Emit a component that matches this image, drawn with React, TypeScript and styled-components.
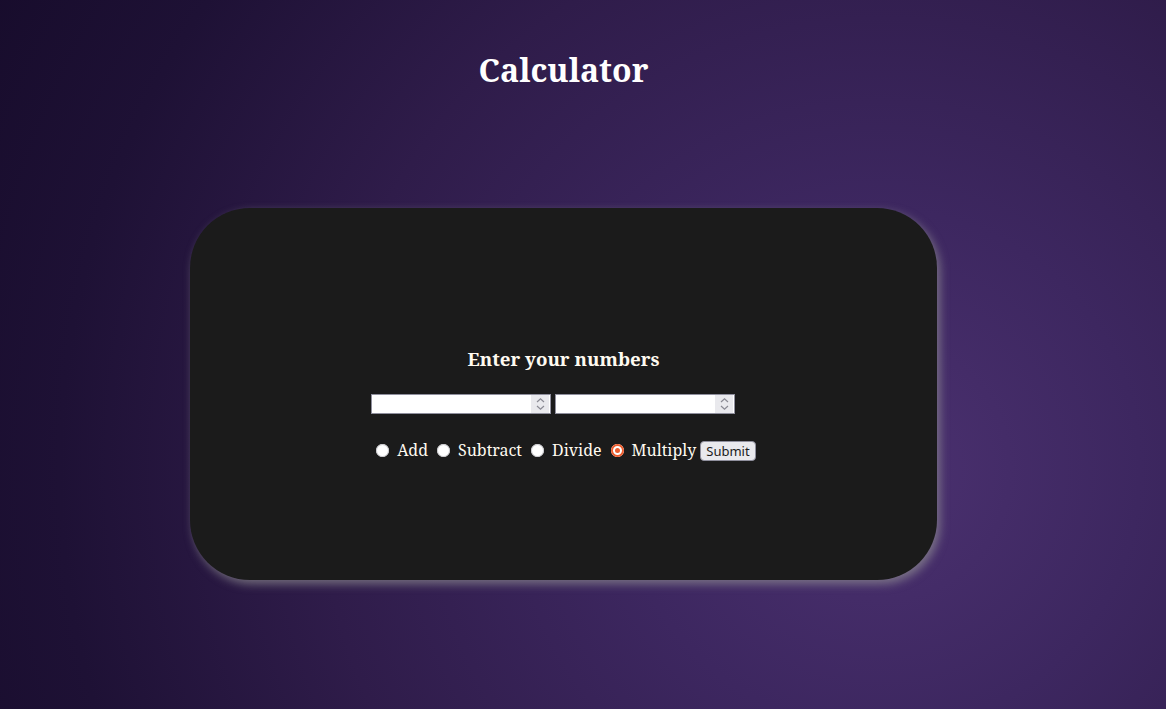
import { useState } from 'react';
import styled, { createGlobalStyle } from 'styled-components';

const GlobalStyle = createGlobalStyle`
  html, body {
    margin: 0;
    padding: 0;
  }
  body {
    font-family: "Noto Serif", "DejaVu Serif Condensed", "DejaVu Serif", serif;
    background: #160b2a;
  }
`

const operations = ['Add', 'Subtract', 'Divide', 'Multiply'];

function Spinner() {
  return (
    <SpinBox>
      <svg width="9" height="14" viewBox="0 0 9 14" fill="none" stroke="#8a8a94" strokeWidth="1.2">
        <path d="M1 5 L4.5 1.8 L8 5" />
        <path d="M1 9 L4.5 12.2 L8 9" />
      </svg>
    </SpinBox>
  )
}

function App() {
  const [op, setOp] = useState('Multiply');

  return (
    <Page>
      <GlobalStyle />
      <Column>
        <Title>Calculator</Title>

        <Card>
          <Heading>Enter your numbers</Heading>

          <Form>
            <InputsRow>
              <InputWrap>
                <NumberInput type="number" />
                <Spinner />
              </InputWrap>
              <InputWrap>
                <NumberInput type="number" />
                <Spinner />
              </InputWrap>
            </InputsRow>

            <OptionsRow>
              {operations.map((name) => (
                <Option key={name}>
                  <Radio
                    type="radio"
                    name="operation"
                    checked={op === name}
                    onChange={() => setOp(name)}
                  />
                  {name}
                </Option>
              ))}
              <SubmitButton type="button">Submit</SubmitButton>
            </OptionsRow>
          </Form>
        </Card>
      </Column>
    </Page>
  )
}

export default App

const Page = styled.div`
  min-height: 100vh;
  background: radial-gradient(
    circle at 880px 470px,
    #4b3170 0px,
    #3d2760 260px,
    #2f1c4a 560px,
    #1e1135 820px,
    #160b2a 1050px
  );
`

const Column = styled.div`
  width: 1127px;
  display: flex;
  flex-direction: column;
  align-items: center;
`

const Title = styled.h1`
  margin: 50px 0 0;
  font-size: 32px;
  line-height: 40px;
  font-weight: 700;
  color: #ffffff;
`

const Card = styled.div`
  margin-top: 118px;
  width: 747px;
  height: 372px;
  box-sizing: border-box;
  border-radius: 60px;
  background: #1b1b1b;
  box-shadow: 3px 4px 10px rgba(150, 150, 150, 0.65);
  display: flex;
  flex-direction: column;
  align-items: center;
  padding-top: 138px;
  color: #fffaf0;
`

const Heading = styled.h3`
  margin: 0;
  font-size: 18.72px;
  line-height: 26px;
  font-weight: 700;
`

const Form = styled.div`
  display: flex;
  flex-direction: column;
  align-items: flex-start;
`

const InputsRow = styled.div`
  margin-top: 22px;
  display: flex;
  gap: 4px;
`

const InputWrap = styled.div`
  position: relative;
  width: 180px;
  height: 20px;
`

const NumberInput = styled.input`
  display: block;
  width: 100%;
  height: 100%;
  box-sizing: border-box;
  margin: 0;
  padding: 0 22px 0 4px;
  border: 1px solid #8f8f9d;
  border-radius: 0;
  background: #ffffff;
  appearance: textfield;
  -moz-appearance: textfield;
  font-size: 13px;

  &::-webkit-inner-spin-button,
  &::-webkit-outer-spin-button {
    -webkit-appearance: none;
    margin: 0;
  }
`

const SpinBox = styled.div`
  position: absolute;
  top: 1px;
  right: 2px;
  width: 18px;
  height: 18px;
  background: #e9e9ed;
  display: flex;
  align-items: center;
  justify-content: center;
  pointer-events: none;
`

const OptionsRow = styled.div`
  margin-top: 25px;
  display: flex;
  align-items: center;
  font-size: 16px;
  line-height: 20px;
`

const Option = styled.label`
  display: flex;
  align-items: center;
  margin-right: 4px;
`

const Radio = styled.input`
  appearance: none;
  width: 13px;
  height: 13px;
  margin: 1px 8px 0 5px;
  border-radius: 50%;
  background: #ffffff;
  box-shadow: inset 0 0 0 1px #c8c8cc;

  &:checked {
    background: #ec5d2f;
    box-shadow: inset 0 0 0 2px #ec5d2f, inset 0 0 0 4px #ffffff;
  }
`

const SubmitButton = styled.button`
  height: 20px;
  margin: 2px 0 0;
  padding: 0 5px;
  border: 1px solid #8f8f9d;
  border-radius: 4px;
  background: #e9e9ed;
  color: #1b1b1b;
  font-family: "Noto Sans", "Open Sans", sans-serif;
  font-size: 13px;
  line-height: 18px;
`
